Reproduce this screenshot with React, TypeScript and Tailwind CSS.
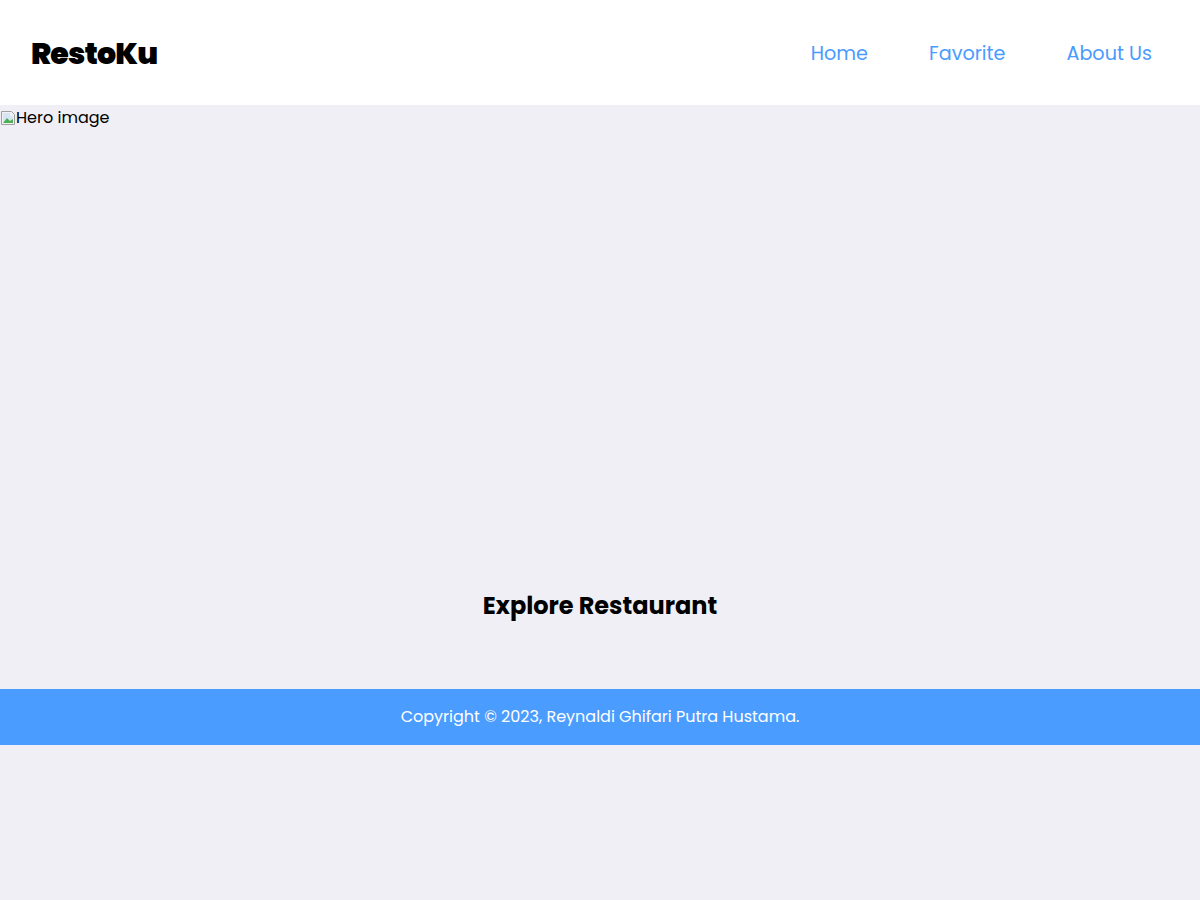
const font = { fontFamily: '"Poppins", Inter, "Noto Sans", sans-serif' };

const BrokenImageIcon = () => (
  <svg width="16" height="16" viewBox="0 0 16 16" className="inline-block align-[-3px]">
    <path d="M1.5 1.5h10l3 3v10h-13z" fill="#f2f2f2" stroke="#a0a0a0" />
    <path d="M3 3h7v3h3v6H3z" fill="#d6e6f5" />
    <path d="M3 13l4-5 3 3 3-2v4z" fill="#4caf50" />
  </svg>
);

const navLinks = ["Home", "Favorite", "About Us"];

export default function App() {
  return (
    <div className="min-h-[900px] bg-[#efeff5] text-black" style={font}>
      <header className="flex h-[105px] items-center justify-between bg-white pl-[31px] pr-[48px]">
        <h1 className="pt-[2px] text-[30px] font-black tracking-tight">RestoKu</h1>
        <nav className="flex gap-[61px] pt-[4px]">
          {navLinks.map((link) => (
            <a key={link} href="#" className="text-[19.2px] text-[#4a9bfe]">
              {link}
            </a>
          ))}
        </nav>
      </header>

      <main>
        <div className="h-[440px] pt-[1px] text-[16px] leading-[24px]">
          <BrokenImageIcon />
          <span>Hero image</span>
        </div>
        <section className="pt-[44px] pb-[66px]">
          <h2 className="text-center text-[24px] font-bold leading-[34px]">Explore Restaurant</h2>
        </section>
      </main>

      <footer className="flex h-[56px] items-center justify-center bg-[#4b9cff]">
        <p className="text-[16px] text-white">Copyright © 2023, Reynaldi Ghifari Putra Hustama.</p>
      </footer>
    </div>
  );
}
